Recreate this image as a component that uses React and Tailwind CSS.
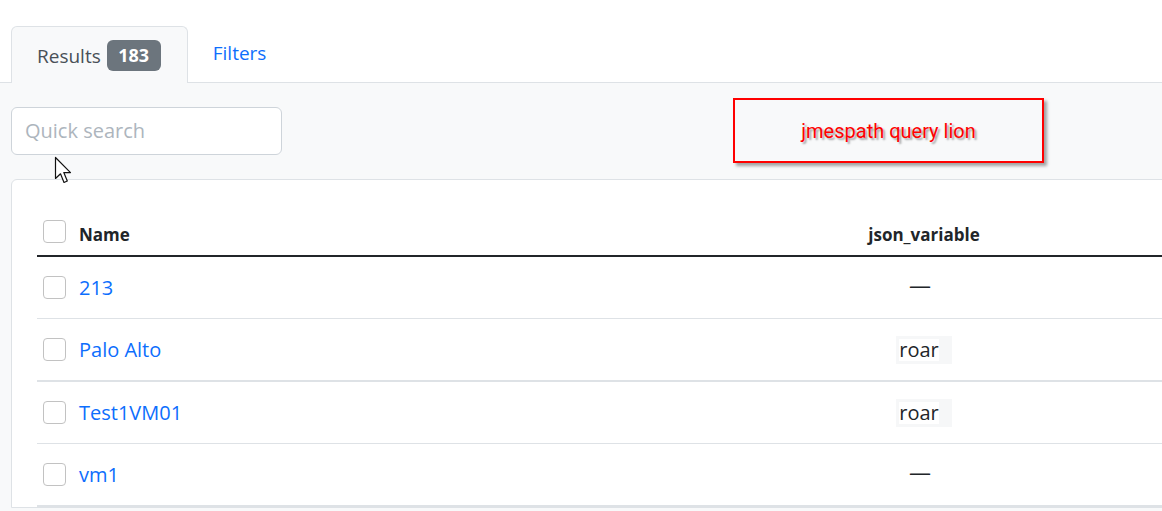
import React from 'react';

const rows = [
    { name: '213', value: null, cls: 'h-[62px] border-b' },
    { name: 'Palo Alto', value: 'roar', cls: 'h-[63px] border-b-2' },
    { name: 'Test1VM01', value: 'roar', cls: 'h-[62px] border-b' },
    { name: 'vm1', value: null, cls: 'h-[63px] border-b-2' },
];

function Checkbox() {
    return <div className="w-[23px] h-[23px] shrink-0 rounded-[4px] border border-[#c2c2c2] bg-white" />;
}

function Cursor() {
    return (
        <svg className="absolute left-[54px] top-[156px]" width="22" height="30" viewBox="0 0 22 30">
            <path d="M1.5 1.5 L1.5 22.5 L6.5 17.8 L10 26.5 L13.3 25 L9.8 16.6 L16.5 16.6 Z" fill="white" stroke="#111" strokeWidth="1.2" strokeLinejoin="round" />
        </svg>
    );
}

export default function App() {
    return (
        <div className="relative w-[1162px] h-[511px] overflow-hidden bg-white text-[#212529] font-['Open_Sans',sans-serif]">
            {/* Tabs */}
            <div className="h-[83px] flex items-end pl-[11px] border-b border-[#dee2e6]">
                <div className="h-[57px] -mb-px flex items-center gap-[6px] pl-[25px] pr-[26px] rounded-t-[6px] border border-b-0 border-[#dee2e6] bg-[#f8f9fa] text-[19px] text-[#495057]">
                    <span className="pt-[2px]">Results</span>
                    <span className="h-[31px] w-[54px] flex items-center justify-center rounded-[6px] bg-[#6c757d] text-white text-[18px] font-bold">183</span>
                </div>
                <div className="h-[57px] flex items-center pl-[25px] text-[19px] text-[#0d6efd]">Filters</div>
            </div>

            <div className="bg-[#f8f9fa] pl-[11px] pt-[15px] h-full">
                <div className="flex items-center">
                    <input
                        className="w-[271px] h-[48px] rounded-[6px] border border-[#ced4da] bg-white px-[13px] text-[20px] placeholder:text-[#adb5bd] outline-none"
                        placeholder="Quick search"
                    />
                    <div className="ml-[451px] w-[311px] h-[65px] flex items-center justify-center border-2 border-[#ff0000] shadow-[3px_3px_3px_rgba(0,0,0,0.35)] font-['Roboto',sans-serif] text-[20px] text-[#ff0000] [text-shadow:2px_2px_2px_rgba(0,0,0,0.35)]">
                        jmespath query lion
                    </div>
                </div>

                {/* Card */}
                <div className="mt-[16px] w-[1300px] rounded-tl-[6px] border border-[#dee2e6] bg-white pl-[25px] pt-[24px]">
                    <div className="flex h-[53px] border-b-2 border-[#212529]">
                        <div className="w-[723px] flex items-center gap-[13px] pl-[6px]">
                            <div className="mt-[3px]"><Checkbox /></div>
                            <span className="font-bold text-[17px] pt-[11px]">Name</span>
                        </div>
                        <div className="w-[328px] flex items-center justify-center pt-[11px] font-bold text-[17px]">json_variable</div>
                        <div className="flex-1" />
                    </div>
                    {rows.map((row) => (
                        <div key={row.name} className={`flex border-[#dee2e6] ${row.cls}`}>
                            <div className="w-[723px] flex items-center gap-[13px] pl-[6px]">
                                <Checkbox />
                                <span className="text-[20px] text-[#0d6efd]">{row.name}</span>
                            </div>
                            <div className="w-[328px] flex items-center justify-center text-[20px]">
                                {row.value ? (
                                    <span className="bg-[#f6f7f8] pl-[3px] pr-[13px] py-[3px] leading-none">
                                        <span className="bg-white inline-block py-[1px]">{row.value}</span>
                                    </span>
                                ) : (
                                    <span className="-mt-[6px] mr-[8px] text-[22px]">—</span>
                                )}
                            </div>
                            <div className="flex-1" />
                        </div>
                    ))}
                </div>
            </div>

            <Cursor />
        </div>
    );
}
